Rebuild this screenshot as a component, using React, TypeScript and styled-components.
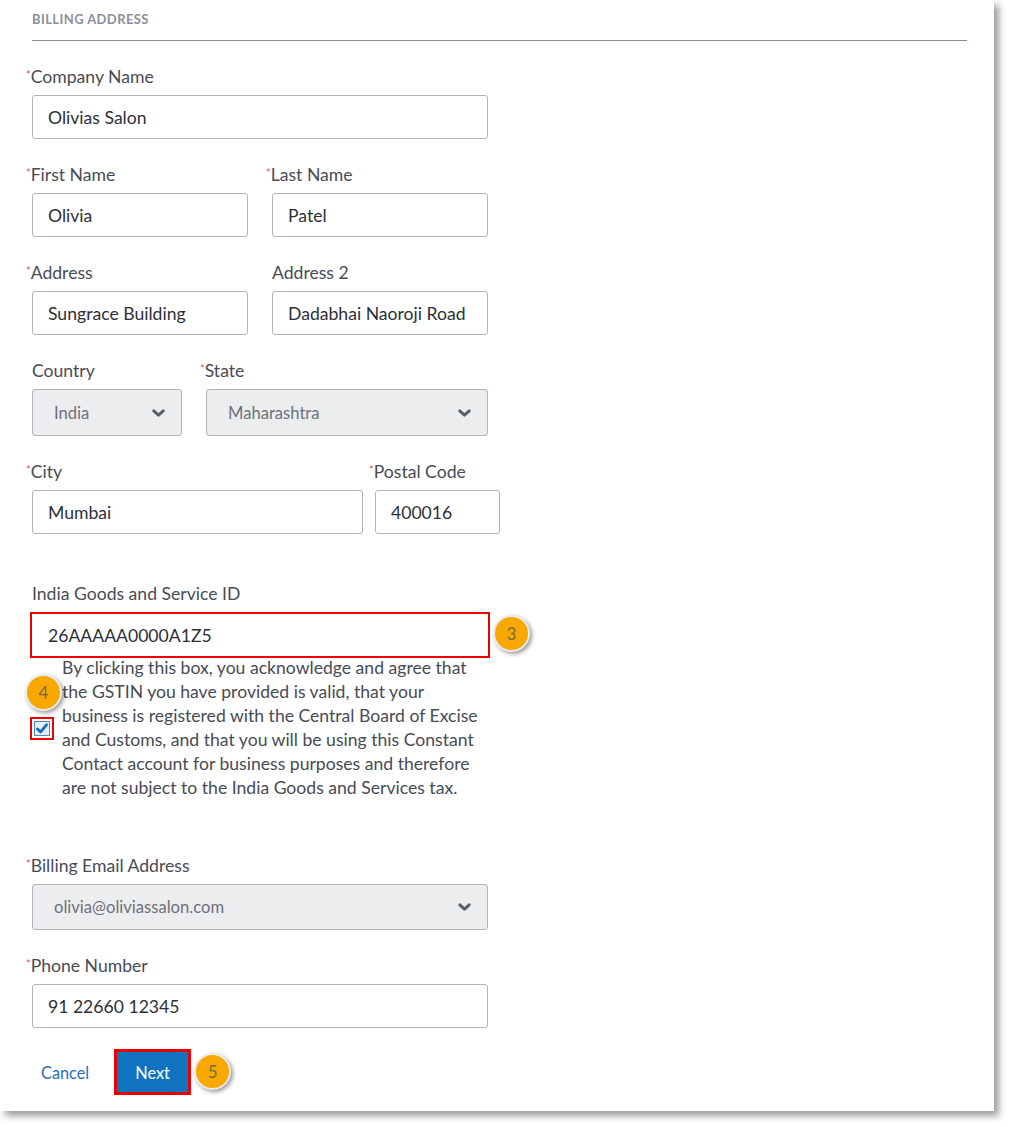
import React from 'react';
import styled, { createGlobalStyle } from 'styled-components';

const GlobalStyle = createGlobalStyle`
  html, body {
    margin: 0;
    padding: 0;
    background: #ffffff;
  }
  body {
    font-family: Lato, 'Open Sans', 'Liberation Sans', sans-serif;
    color: #474c55;
    padding-bottom: 16px;
  }
`;

const Panel = styled.div`
  width: 994px;
  box-sizing: border-box;
  background: #ffffff;
  padding: 11px 27px 16px 32px;
  box-shadow: 5px 5px 7px rgba(0, 0, 0, 0.38);
`;

const Heading = styled.div`
  font-size: 13px;
  font-weight: 700;
  letter-spacing: 0.4px;
  color: #8b909a;
  line-height: 16px;
  padding-bottom: 13px;
  border-bottom: 1px solid #868c95;
`;

const Form = styled.div`
  display: flex;
  flex-direction: column;
  padding-top: 26px;
`;

const Row = styled.div<{ $gap: number; $mt?: number }>`
  display: flex;
  gap: ${(p) => p.$gap}px;
  margin-top: ${(p) => p.$mt ?? 0}px;
`;

const Field = styled.div<{ $w: number }>`
  width: ${(p) => p.$w}px;
  display: flex;
  flex-direction: column;
  position: relative;
`;

const Label = styled.label`
  font-size: 17.6px;
  line-height: 20px;
  height: 20px;
  color: #474c55;
  margin-bottom: 8px;
  white-space: nowrap;
`;

const Star = styled.span`
  color: #e6514b;
  font-size: 11px;
  line-height: 0;
  margin-left: -6px;
  margin-right: 0;
  position: relative;
  top: -4px;
`;

const Input = styled.div<{ $flag?: boolean }>`
  box-sizing: border-box;
  height: ${(p) => (p.$flag ? 46 : 44)}px;
  border: ${(p) => (p.$flag ? '2px solid #ee0000' : '1px solid #b1b5bb')};
  border-radius: ${(p) => (p.$flag ? 0 : 3)}px;
  margin: ${(p) => (p.$flag ? '0 -2px' : '0')};
  padding: 0 ${(p) => (p.$flag ? 16 : 15)}px;
  display: flex;
  align-items: center;
  font-size: 17.6px;
  color: #2c3037;
  background: #ffffff;
`;

const Select = styled.div<{ $h?: number }>`
  box-sizing: border-box;
  height: ${(p) => p.$h ?? 46}px;
  border: 1px solid #b1b5bb;
  border-radius: 3px;
  padding: 0 16px 0 21px;
  display: flex;
  align-items: center;
  justify-content: space-between;
  font-size: 16.6px;
  color: #6c717a;
  background: #ecedef;
`;

const Badge = styled.div<{ $left: string; $top: string }>`
  position: absolute;
  left: ${(p) => p.$left};
  top: ${(p) => p.$top};
  width: 37px;
  height: 37px;
  border-radius: 50%;
  background: #f8a800;
  border: 2px solid #ececec;
  box-sizing: border-box;
  box-shadow: 2px 2px 4px rgba(0, 0, 0, 0.4);
  display: flex;
  align-items: center;
  justify-content: center;
  font-size: 17px;
  color: #7c6840;
  z-index: 2;
`;

const ConsentRow = styled.div`
  display: flex;
  align-items: center;
  gap: 8px;
  margin-left: -2px;
  margin-top: -2px;
`;

const CheckWrap = styled.div`
  position: relative;
  width: 24px;
  height: 23px;
  box-sizing: border-box;
  border: 2px solid #ee0000;
  display: flex;
  align-items: center;
  justify-content: center;
  flex-shrink: 0;
`;

const CheckBox = styled.div`
  width: 16px;
  height: 15px;
  box-sizing: border-box;
  border: 1px solid #4d86c4;
  background: #e5effa;
  display: flex;
  align-items: center;
  justify-content: center;
`;

const Consent = styled.p`
  margin: 0;
  font-size: 17.6px;
  line-height: 24px;
  color: #474c55;
  white-space: nowrap;
`;

const Actions = styled.div`
  display: flex;
  align-items: center;
  gap: 25px;
  margin-top: 21px;
  padding-left: 9px;
`;

const CancelLink = styled.a`
  color: #1f70b8;
  font-size: 16.3px;
  text-decoration: none;
  cursor: pointer;
`;

const NextWrap = styled.div`
  position: relative;
`;

const NextButton = styled.button`
  width: 77px;
  height: 46px;
  box-sizing: border-box;
  border: 3px solid #ee0000;
  background: #0f73c0;
  color: #ffffff;
  font-family: inherit;
  font-size: 16.3px;
  cursor: pointer;
  padding: 0;
`;

const Chevron = () => (
  <svg width="13" height="8" viewBox="0 0 13 8">
    <polyline points="1.8,1.8 6.5,6.2 11.2,1.8" fill="none" stroke="#596069" strokeWidth="3" strokeLinecap="round" strokeLinejoin="round" />
  </svg>
);

const Check = () => (
  <svg width="12" height="11" viewBox="0 0 12 11">
    <path d="M1.5 6 L4.5 9 L10.5 1.8" fill="none" stroke="#1a6fc4" strokeWidth="2.8" strokeLinecap="round" strokeLinejoin="round" />
  </svg>
);

const Req: React.FC<{ children: React.ReactNode }> = ({ children }) => (
  <Label>
    <Star>*</Star>
    {children}
  </Label>
);

const App: React.FC = () => {
  return (
    <>
      <GlobalStyle />
      <Panel>
        <Heading>BILLING ADDRESS</Heading>
        <Form>
          <Row $gap={24}>
            <Field $w={456}>
              <Req>Company Name</Req>
              <Input>Olivias Salon</Input>
            </Field>
          </Row>

          <Row $gap={24} $mt={26}>
            <Field $w={216}>
              <Req>First Name</Req>
              <Input>Olivia</Input>
            </Field>
            <Field $w={216}>
              <Req>Last Name</Req>
              <Input>Patel</Input>
            </Field>
          </Row>

          <Row $gap={24} $mt={26}>
            <Field $w={216}>
              <Req>Address</Req>
              <Input>Sungrace Building</Input>
            </Field>
            <Field $w={216}>
              <Label>Address 2</Label>
              <Input>Dadabhai Naoroji Road</Input>
            </Field>
          </Row>

          <Row $gap={24} $mt={26}>
            <Field $w={150}>
              <Label>Country</Label>
              <Select $h={47}>
                India
                <Chevron />
              </Select>
            </Field>
            <Field $w={282}>
              <Req>State</Req>
              <Select $h={47}>
                Maharashtra
                <Chevron />
              </Select>
            </Field>
          </Row>

          <Row $gap={12} $mt={26}>
            <Field $w={331}>
              <Req>City</Req>
              <Input>Mumbai</Input>
            </Field>
            <Field $w={125}>
              <Req>Postal Code</Req>
              <Input>400016</Input>
            </Field>
          </Row>

          <Row $gap={24} $mt={50}>
            <Field $w={456}>
              <Label>India Goods and Service ID</Label>
              <Input $flag>26AAAAA0000A1Z5</Input>
              <Badge $left="calc(100% + 5px)" $top="31px">3</Badge>
            </Field>
          </Row>

          <ConsentRow>
            <CheckWrap>
              <CheckBox>
                <Check />
              </CheckBox>
              <Badge $left="-7px" $top="-45px">4</Badge>
            </CheckWrap>
            <Consent>
              By clicking this box, you acknowledge and agree that
              <br />
              the GSTIN you have provided is valid, that your
              <br />
              business is registered with the Central Board of Excise
              <br />
              and Customs, and that you will be using this Constant
              <br />
              Contact account for business purposes and therefore
              <br />
              are not subject to the India Goods and Services tax.
            </Consent>
          </ConsentRow>

          <Row $gap={24} $mt={56}>
            <Field $w={456}>
              <Req>Billing Email Address</Req>
              <Select>
                olivia@oliviassalon.com
                <Chevron />
              </Select>
            </Field>
          </Row>

          <Row $gap={24} $mt={26}>
            <Field $w={456}>
              <Req>Phone Number</Req>
              <Input>91 22660 12345</Input>
            </Field>
          </Row>

          <Actions>
            <CancelLink>Cancel</CancelLink>
            <NextWrap>
              <NextButton>Next</NextButton>
              <Badge $left="calc(100% + 3px)" $top="4px">5</Badge>
            </NextWrap>
          </Actions>
        </Form>
      </Panel>
    </>
  );
};

export default App;
